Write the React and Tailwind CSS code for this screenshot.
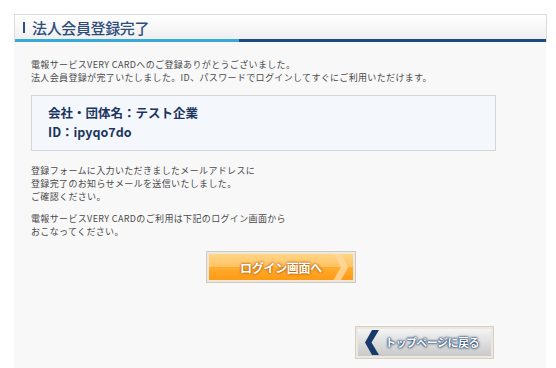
import React from "react";

function OrangeButton() {
  return (
    <div className="w-[150px] h-[32px] border border-[#cfc8bd] bg-[#ece7df] p-[2px]">
      <div className="relative h-full w-full overflow-hidden bg-gradient-to-b from-[#ffc85a] via-[#ffad2f] to-[#ff9a12] flex items-center justify-center">
        <div className="absolute inset-x-0 top-0 h-1/2 bg-white/25" />
        <svg className="absolute right-[4px] top-0 h-full" width="18" viewBox="0 0 18 28">
          <path d="M2 0 L10 0 L18 14 L10 28 L2 28 L10 14 Z" fill="#ffd79a" opacity="0.85" />
        </svg>
        <span className="relative text-white text-[12px] font-bold tracking-tight [text-shadow:0_0_3px_#b05a00,0_0_2px_#b05a00]">
          ログイン画面へ
        </span>
      </div>
    </div>
  );
}

function BackButton() {
  return (
    <div className="w-[139px] h-[33px] border border-[#d8cfc4] bg-[#ece7df] p-[2px]">
      <div className="relative h-full w-full overflow-hidden bg-gradient-to-b from-[#f4f4f4] via-[#dedede] to-[#c9c9c9] flex items-center">
        <svg className="ml-[7px] shrink-0" width="14" height="25" viewBox="0 0 14 25">
          <path d="M7 0 L14 0 L6.5 12.5 L14 25 L7 25 L0 12.5 Z" fill="#173a6b" />
        </svg>
        <span className="ml-[6px] text-white text-[11px] font-bold tracking-tighter [text-shadow:0_0_3px_#173a6b,0_0_2px_#173a6b,0_0_1px_#173a6b]">
          トップページに戻る
        </span>
      </div>
    </div>
  );
}

export default function App() {
  return (
    <div className="min-h-screen w-[556px] bg-white pt-[14px] pl-[14px] font-['Noto_Sans_CJK_JP','Noto_Sans',sans-serif]">
      {/* 見出し */}
      <div className="w-[533px] border border-[#dcdcdc] border-b-0 bg-gradient-to-b from-white to-[#ededed]">
        <div className="h-[24px] flex items-center pl-[8px] gap-[7px]">
          <span className="w-[2px] h-[11px] bg-[#2d4d7c]" />
          <h1 className="text-[15px] leading-none font-medium text-[#2d4d7c] tracking-tight">法人会員登録完了</h1>
        </div>
        <div className="flex h-[3px]">
          <div className="w-[224px] bg-[#38a9d8]" />
          <div className="flex-1 bg-[#1e4a80]" />
        </div>
      </div>

      {/* 本文 */}
      <div className="w-[532px] min-h-[327px] bg-[#f8f8f8] pl-[17px] pt-[16px] text-[9px] leading-[13px] tracking-[0.35px] text-[#4a4a4a]">
        <p>電報サービスVERY CARDへのご登録ありがとうございました。</p>
        <p>法人会員登録が完了いたしました。ID、パスワードでログインしてすぐにご利用いただけます。</p>

        <div className="mt-[11px] w-[465px] h-[56px] border border-[#d6d6d6] bg-[#f4f8fc] pl-[16px] pt-[7px] text-[12.5px] leading-[19px] tracking-normal font-bold text-[#1c3560]">
          <p>会社・団体名：テスト企業</p>
          <p>ID：ipyqo7do</p>
        </div>

        <div className="mt-[13px]">
          <p>登録フォームに入力いただきましたメールアドレスに</p>
          <p>登録完了のお知らせメールを送信いたしました。</p>
          <p>ご確認ください。</p>
        </div>
        <div className="mt-[9px]">
          <p>電報サービスVERY CARDのご利用は下記のログイン画面から</p>
          <p>おこなってください。</p>
        </div>

        <div className="mt-[13px] pl-[175px]">
          <OrangeButton />
        </div>
        <div className="mt-[43px] pl-[324px] pb-[8px]">
          <BackButton />
        </div>
      </div>
    </div>
  );
}
